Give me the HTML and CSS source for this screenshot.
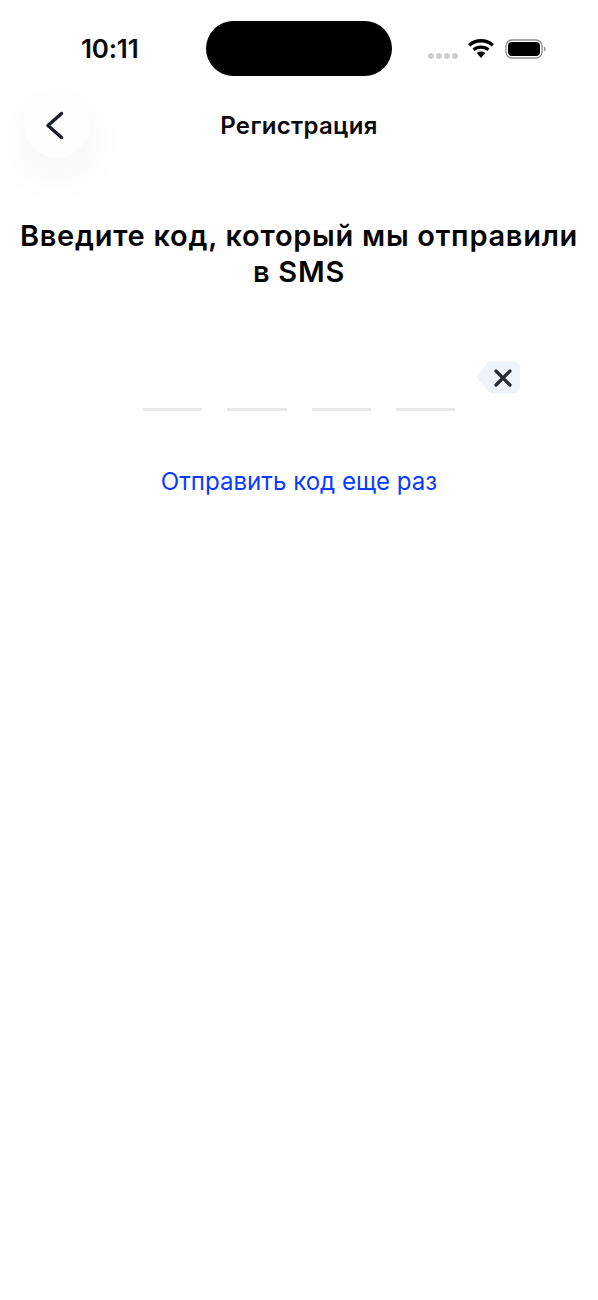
FILE: index.html
```html
<!DOCTYPE html>
<html lang="ru">
<head>
<meta charset="utf-8">
<title>Регистрация</title>
<link rel="stylesheet" href="styles.css">
</head>
<body>
<div class="screen">
  <div class="status">
    <span class="time">10:11</span>
    <div class="island"></div>
    <div class="status-icons">
      <div class="dots"><i></i><i></i><i></i><i></i></div>
      <svg class="wifi" width="26" height="20" viewBox="0 0 26 20"><path d="M1.200 6.300C7.800.300 18.200.300 24.800 6.300" fill="none" stroke="#000" stroke-width="3.400"/><path d="M5.500 10.800c4.200-3.700 10.800-3.700 15 0" fill="none" stroke="#000" stroke-width="3.200"/><path d="M8.800 14c2.500-1.900 5.900-1.900 8.400 0L13 19z" fill="#000"/></svg>
      <svg class="battery" width="41" height="20" viewBox="0 0 41 20"><rect x="1" y="1" width="36" height="18" rx="5.800" fill="none" stroke="#8e8e8e" stroke-width="1.300"/><rect x="3" y="3" width="32" height="14" rx="4" fill="#000"/><path d="M39 7.500c1.200.4 1.800 1.300 1.800 2.500s-.6 2.100-1.800 2.500z" fill="#9a9a9a"/></svg>
    </div>
  </div>
  <header class="nav">
    <button class="back" aria-label="Назад">
      <svg width="24" height="34" viewBox="0 0 24 34"><path d="M18.500 5.500 5 17.500 18.500 29.500" fill="none" stroke="#1c1f26" stroke-width="3.400" stroke-linecap="round" stroke-linejoin="round"/></svg>
    </button>
    <h1 class="nav-title">Регистрация</h1>
  </header>
  <h2 class="heading">Введите код, который мы отправили<br>в SMS</h2>
  <div class="code-row">
    <div class="code">
      <span class="slot"></span><span class="slot"></span><span class="slot"></span><span class="slot"></span>
    </div>
    <button class="erase" aria-label="Удалить">
      <svg width="44" height="34" viewBox="0 0 44 34"><path d="M13 .5h25a5 5 0 0 1 5 5v22a5 5 0 0 1-5 5H15a3 3 0 0 1-2-.9L1.200 19a4 4 0 0 1 0-5.400L11 1.300a3 3 0 0 1 2-.8z" fill="#eff3fb"/><path d="M19 10 33 24M33 10 19 24" stroke="#262b36" stroke-width="3.200" stroke-linecap="round"/></svg>
    </button>
  </div>
  <a class="resend" href="#">Отправить код еще раз</a>
</div>
</body>
</html>
```
FILE: styles.css
```css
* { box-sizing: border-box; }
html, body { margin: 0; padding: 0; background: #fff; }
body { font-family: Inter, "Liberation Sans", sans-serif; color: #000; }
.screen { width: 598px; height: 1300px; overflow: hidden; display: flex; flex-direction: column; }
.status { height: 92px; padding: 21px 52px 0 81px; display: flex; justify-content: space-between; align-items: flex-start; position: relative; }
.time { font-size: 26px; font-weight: 600; line-height: 30px; margin-top: 13px; letter-spacing: -0.2px; color: #0a0a0a; }
.island { position: absolute; left: 206px; top: 21px; width: 186px; height: 55px; border-radius: 28px; background: #000; }
.status-icons { display: flex; align-items: center; margin-top: 18px; }
.dots { display: flex; gap: 2px; margin: 13px 10px 0 0; }
.dots i { width: 6px; height: 6px; border-radius: 50%; background: #cfcfcf; display: block; }
.wifi { margin-right: 11px; }
.nav { height: 66px; position: relative; display: flex; align-items: center; justify-content: center; }
.back { position: absolute; left: 24px; top: 0; width: 66px; height: 66px; border: 0; padding: 0 4px 0 0; border-radius: 50%; background: #fdfdfd; box-shadow: 0 14px 50px rgba(0,0,0,.05); display: flex; align-items: center; justify-content: center; }
.nav-title { margin: 2px 0 0; font-size: 24px; font-weight: 600; line-height: 32px; color: #0a0a0a; letter-spacing: 0.33px; }
.heading { margin: 60px 0 0; text-align: center; font-size: 29px; font-weight: 600; line-height: 36px; letter-spacing: 0.72px; color: #050505; }
.code-row { margin-top: 70px; height: 51px; position: relative; display: flex; justify-content: center; }
.code { display: flex; gap: 25px; align-items: flex-end; height: 51px; }
.slot { width: 59.250px; height: 3px; background: #e8e8e8; display: block; }
.erase { position: absolute; left: 477px; top: 1px; border: 0; padding: 0; background: none; width: 44px; height: 34px; display: block; }
.resend { margin-top: 55px; align-self: center; font-size: 24.100px; line-height: 32px; color: #0a3cff; text-decoration: none; }
```
